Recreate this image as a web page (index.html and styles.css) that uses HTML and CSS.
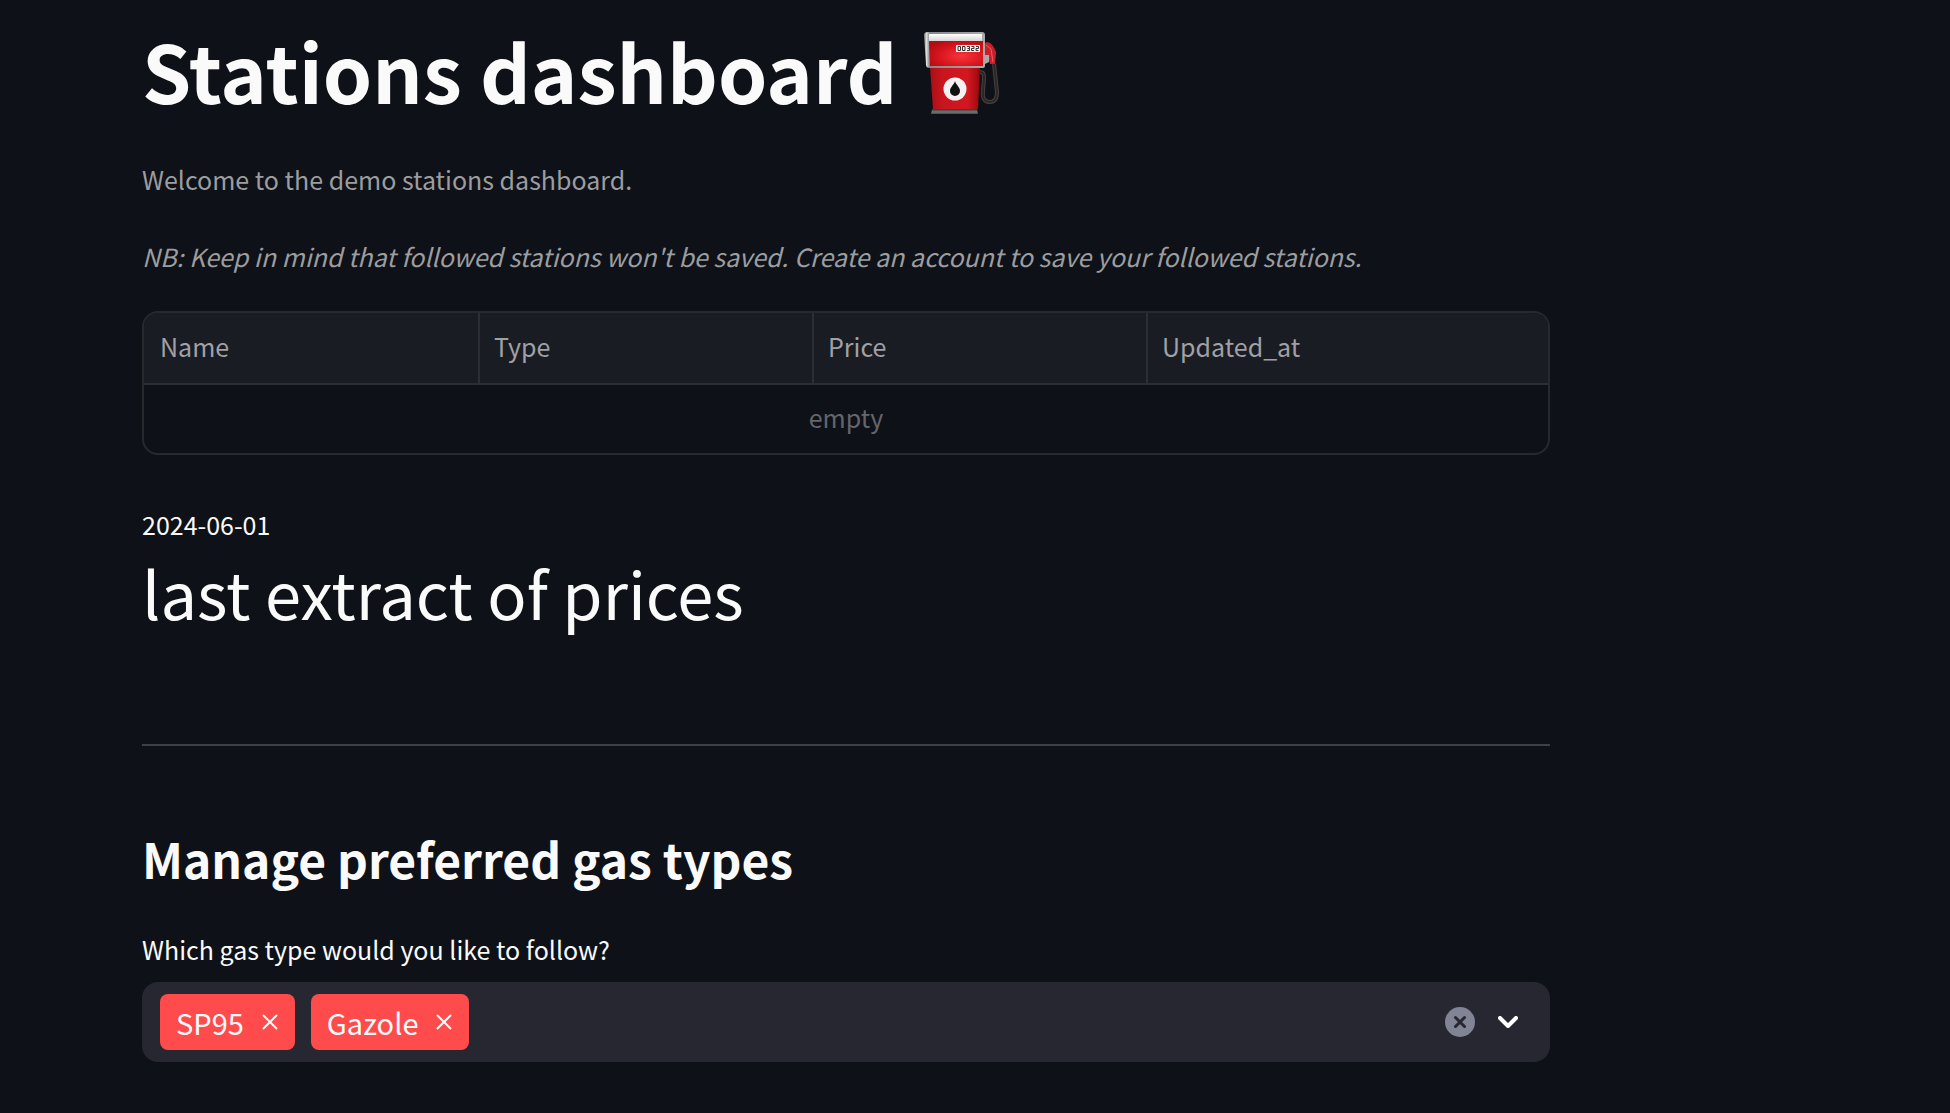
FILE: index.html
```html
<!DOCTYPE html>
<html lang="en">
<head>
<meta charset="utf-8">
<meta name="viewport" content="width=device-width, initial-scale=1">
<title>Stations dashboard</title>
<link rel="stylesheet" href="styles.css">
</head>
<body>
<main class="page">
  <header class="title">
    <h1>Stations dashboard</h1>
    <svg class="pump" viewBox="0 0 76 82" role="img" aria-label="Fuel pump">
      <defs>
        <radialGradient id="redTop" cx=".6" cy=".6" r=".7"><stop offset="0" stop-color="#f8353b"/><stop offset=".6" stop-color="#d8141d"/><stop offset="1" stop-color="#b00d15"/></radialGradient>
        <linearGradient id="redBody"><stop offset="0" stop-color="#a90f16"/><stop offset=".25" stop-color="#c8151e"/><stop offset=".75" stop-color="#d31720"/><stop offset="1" stop-color="#98090f"/></linearGradient>
        <linearGradient id="steel"><stop offset="0" stop-color="#777"/><stop offset=".04" stop-color="#ddd"/><stop offset=".09" stop-color="#888"/><stop offset="1" stop-color="#a9a9a9"/></linearGradient>
        <linearGradient id="white" x2="0" y2="1"><stop offset="0" stop-color="#fff"/><stop offset="1" stop-color="#cfcfcf"/></linearGradient>
        <linearGradient id="base" x2="0" y2="1"><stop offset="0" stop-color="#333"/><stop offset=".6" stop-color="#777"/><stop offset="1" stop-color="#444"/></linearGradient>
      </defs>
      <path d="M56 40c4 0 4 3 4 7l-1 12c-1 8 2 11 7 11s7-4 7-10l-3-28" fill="none" stroke="#4a403f" stroke-width="4"/>
      <path d="M56 40c4 0 4 3 4 7l-1 12c-1 8 2 11 7 11s7-4 7-10l-3-28" fill="none" stroke="#2b2526" stroke-width="2"/>
      <path d="M61 11l2-1c5 1 7 5 9 10l-1 12h-5l-2-9h-4z" fill="#c8202a"/>
      <path d="M62 13l5 4 2 13" fill="none" stroke="#f4585e" stroke-width="1"/>
      <path d="M61 23h4v7l-4 2z" fill="#aaa"/>
      <path d="M6 35h50l-2 42H9z" fill="url(#redBody)"/>
      <path d="M8 77h45l1 5H7z" fill="url(#base)"/>
      <path d="M4 0h54q3 0 3 3v31q0 2-3 2H6q-4 0-4-3L0 3q0-3 4-3z" fill="url(#steel)"/>
      <path d="M5 2h53v8H5z" fill="url(#white)"/>
      <path d="M5 9h54v25H6z" fill="url(#redTop)"/>
      <path d="M32 13h24v7H32z" fill="#f5eeee"/>
      <path d="M34 14.500h2.500v4H34zM38.500 14.500H41v4h-2.500zM43 14.500h2.500v2H43.500M43 18.500h2.500v-2M47.500 14.500H50v2h-2.500v2H50M52 14.500h2.500v2H52v2h2.500" fill="none" stroke="#333" stroke-width="1"/>
      <circle cx="31" cy="57" r="11.500" fill="#f3f1f1"/>
      <path d="M31 49c1 4 5 6 5 10a5 5 0 0 1-10 0c0-4 4-6 5-10z" fill="#111"/>
    </svg>
  </header>

  <p class="caption">Welcome to the demo stations dashboard.</p>
  <p class="caption note">NB: Keep in mind that followed stations won't be saved. Create an account to save your followed stations.</p>

  <div class="frame">
    <table class="data">
      <thead>
        <tr><th scope="col">Name</th><th scope="col">Type</th><th scope="col">Price</th><th scope="col">Updated_at</th></tr>
      </thead>
      <tbody>
        <tr><td colspan="4">empty</td></tr>
      </tbody>
    </table>
  </div>

  <section class="metric">
    <p class="metric-label">2024-06-01</p>
    <p class="metric-value">last extract of prices</p>
  </section>

  <hr class="divider">

  <section class="gas">
    <h2>Manage preferred gas types</h2>
    <label class="field-label" for="gas-type">Which gas type would you like to follow?</label>
    <div class="multiselect">
      <span class="tag">SP95
        <button type="button" aria-label="Remove SP95"><svg viewBox="0 0 16 16"><path d="M1 1l14 14M15 1L1 15"/></svg></button>
      </span>
      <span class="tag">Gazole
        <button type="button" aria-label="Remove Gazole"><svg viewBox="0 0 16 16"><path d="M1 1l14 14M15 1L1 15"/></svg></button>
      </span>
      <input id="gas-type" type="text" role="combobox" aria-expanded="false" autocomplete="off">
      <button class="clear" type="button" aria-label="Clear all"><svg viewBox="0 0 30 30"><circle cx="15" cy="15" r="15"/><path d="M10.500 10.500l9 9M19.500 10.500l-9 9"/></svg></button>
      <button class="open" type="button" aria-label="Open"><svg viewBox="0 0 20 12"><path d="M2 2l8 8 8-8"/></svg></button>
    </div>
  </section>
</main>
</body>
</html>
```
FILE: styles.css
```css
* {
  box-sizing: border-box;
}

body {
  margin: 0;
  background: #0e1117;
  color: #fafafa;
  font-family: "Noto Sans CJK SC", "Noto Sans", sans-serif;
  font-size: 25px;
  line-height: 40px;
}

h1, h2, p {
  margin: 0;
}

button {
  display: flex;
  padding: 0;
  border: 0;
  background: none;
  color: inherit;
  cursor: pointer;
}

.page {
  max-width: 1592px;
  padding: 26px 42px 50px 142px;
}

.title {
  display: flex;
  align-items: flex-end;
  gap: 27px;
  margin-bottom: 45px;
}

h1 {
  font-size: 79px;
  font-weight: 700;
  line-height: 88px;
}

.pump {
  width: 76px;
  height: 82px;
}

.caption {
  color: #9c9d9f;
}

.note {
  margin-top: 37px;
  font-style: italic;
}

.frame {
  margin-top: 35px;
  border: 2px solid #28292d;
  border-radius: 16px;
  overflow: hidden;
}

.data {
  width: 100%;
  border-collapse: separate;
  border-spacing: 0;
  table-layout: fixed;
}

.data th {
  width: 334px;
  height: 72px;
  padding: 0 16px 4px 14px;
  border-left: 2px solid #2c2e35;
  border-bottom: 2px solid #2c2e35;
  background: #1a1c24;
  color: #a0a1a4;
  font-weight: 400;
  text-align: left;
}

.data th:first-child {
  padding-left: 16px;
  border-left: 0;
}

.data th:last-child {
  width: auto;
}

.data td {
  height: 68px;
  padding: 0 0 4px;
  color: #64666b;
  text-align: center;
}

.metric {
  margin-top: 49px;
}

.metric-value {
  margin-top: 8px;
  font-size: 65px;
  line-height: 80px;
}

.divider {
  height: 2px;
  margin: 112px 0 82px;
  border: 0;
  background: #3e4045;
}

h2 {
  margin-bottom: 41px;
  font-size: 48px;
  font-weight: 600;
  line-height: 60px;
}

.field-label {
  display: block;
}

.multiselect {
  display: flex;
  align-items: center;
  min-height: 80px;
  margin-top: 13px;
  padding: 12px 32px 12px 18px;
  border-radius: 16px;
  background: #262730;
}

.tag {
  display: flex;
  align-items: center;
  gap: 18px;
  height: 56px;
  margin-right: 16px;
  padding: 0 17px 0 16px;
  border-radius: 8px;
  background: #ff4b4b;
  font-size: 29px;
  line-height: 40px;
}

.tag svg {
  width: 16px;
  height: 16px;
  fill: none;
  stroke: #fff;
  stroke-width: 2;
}

.multiselect input {
  flex: 1;
  min-width: 0;
  height: 56px;
  padding: 0;
  border: 0;
  outline: 0;
  background: transparent;
  color: inherit;
  font: inherit;
}

.clear svg {
  width: 30px;
  height: 30px;
  fill: #808495;
}

.clear path {
  stroke: #262730;
  stroke-width: 3;
  stroke-linecap: round;
}

.open {
  margin-left: 23px;
}

.open svg {
  width: 20px;
  height: 12px;
  fill: none;
  stroke: #fff;
  stroke-width: 4;
  stroke-linecap: round;
  stroke-linejoin: round;
}
```
